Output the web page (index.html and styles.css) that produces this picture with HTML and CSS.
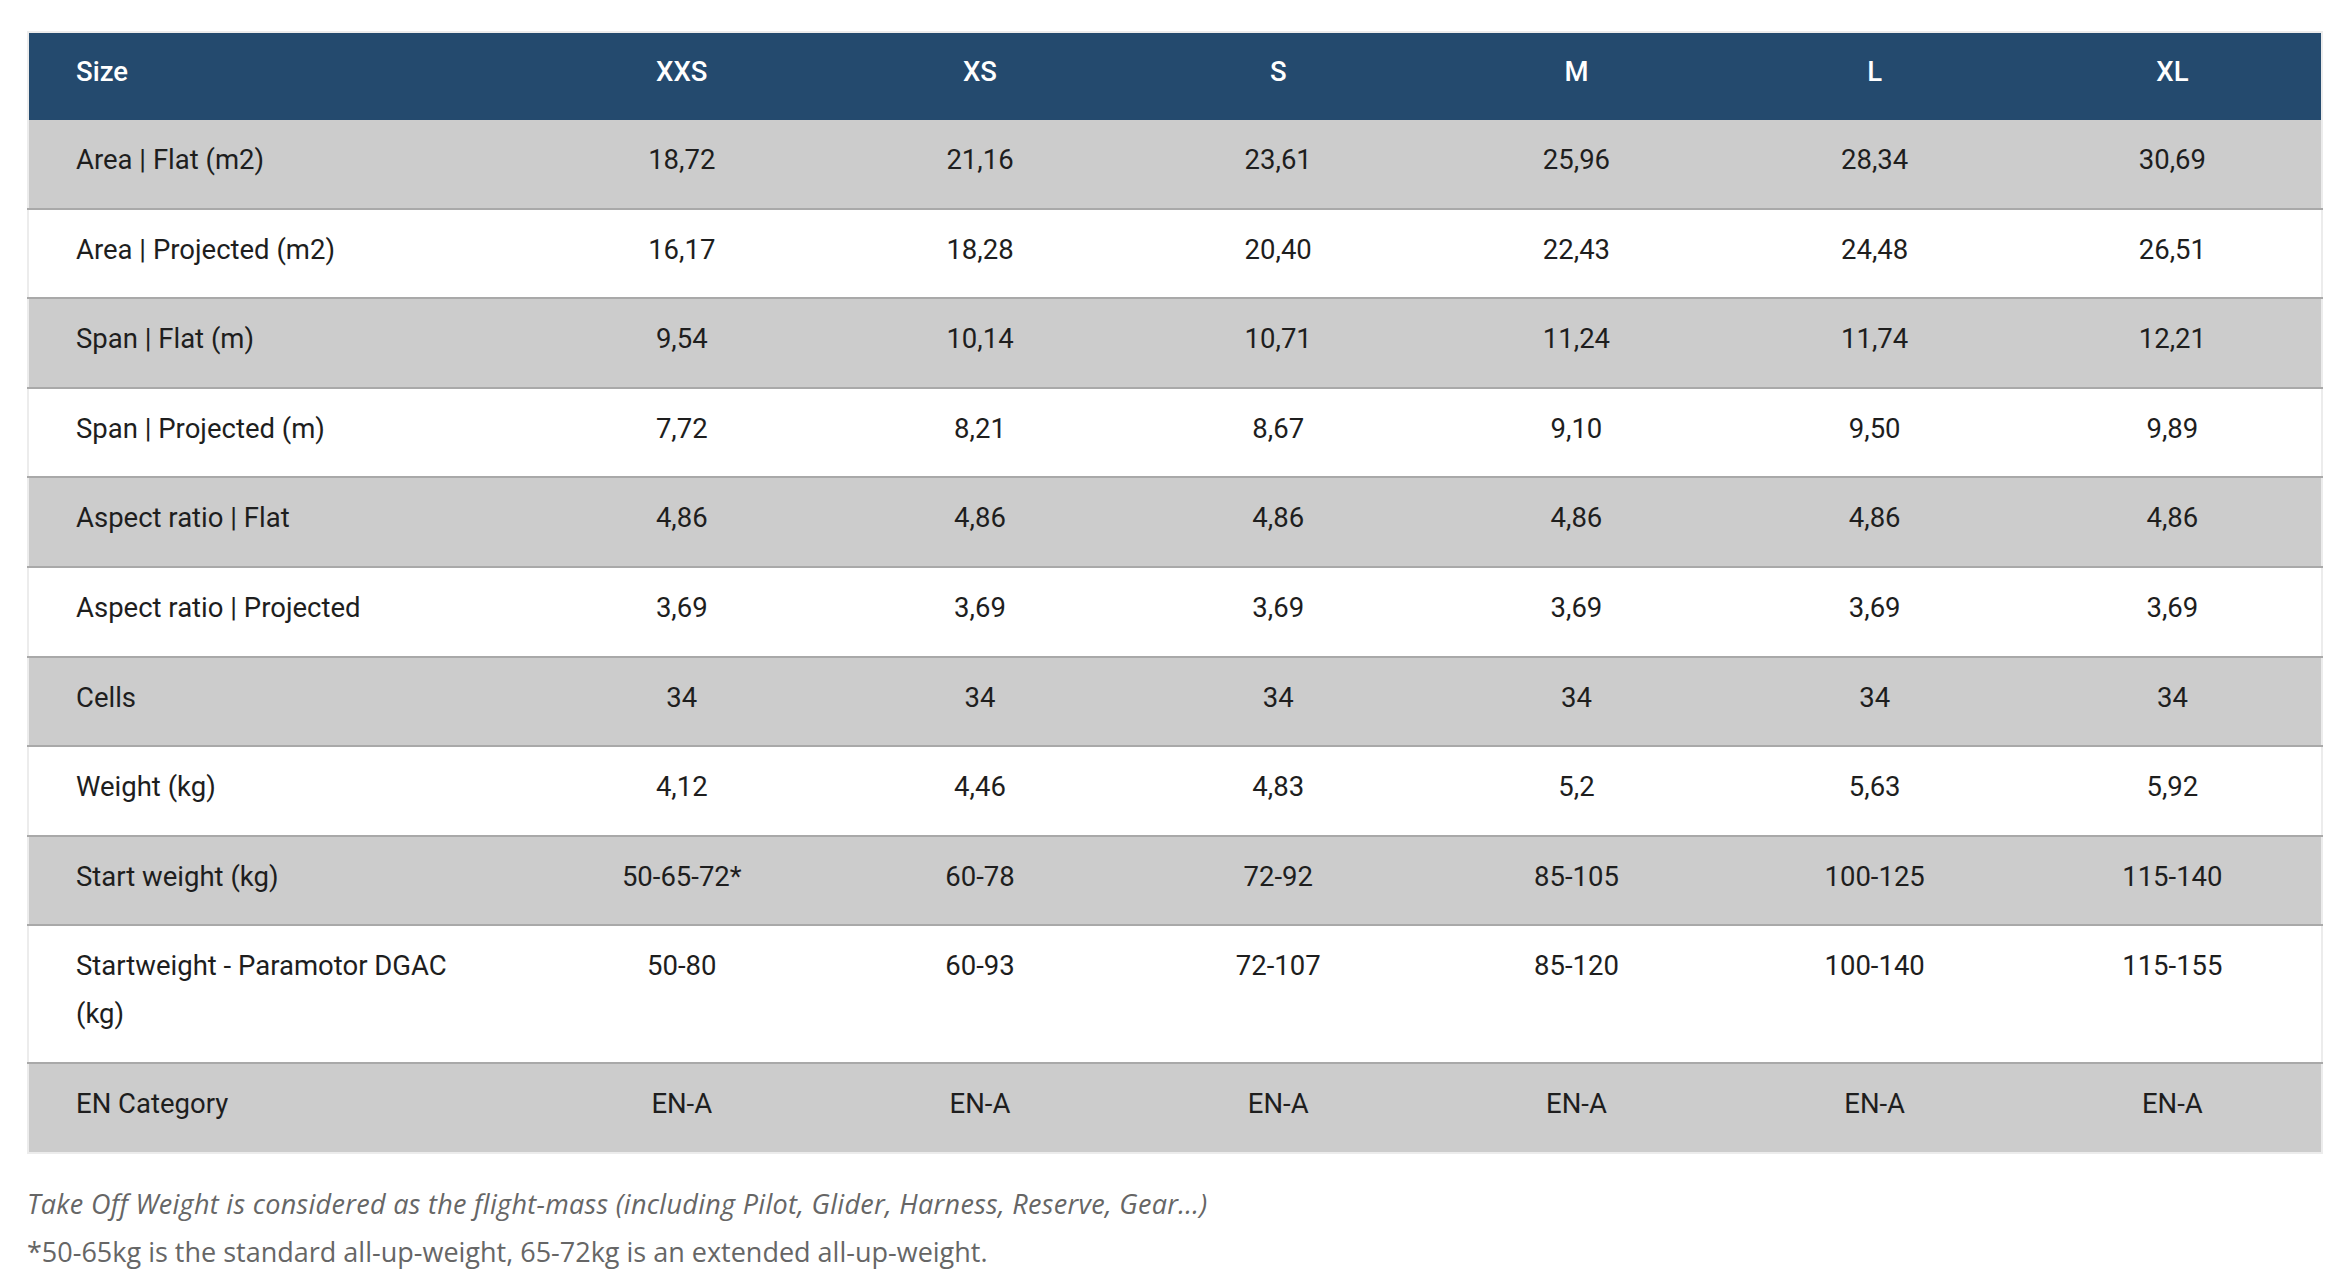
FILE: index.html
```html
<!DOCTYPE html>
<html lang="en">
<head>
<meta charset="utf-8">
<title>Size chart</title>
<link rel="stylesheet" href="styles.css">
</head>
<body>
<div class="page">
  <table class="specs">
    <colgroup>
      <col class="col-label">
      <col class="col-size"><col class="col-size"><col class="col-size">
      <col class="col-size"><col class="col-size"><col class="col-size">
    </colgroup>
    <thead>
      <tr><th class="label">Size</th><th>XXS</th><th>XS</th><th>S</th><th>M</th><th>L</th><th>XL</th></tr>
    </thead>
    <tbody>
      <tr class="alt"><td class="label">Area | Flat (m2)</td><td>18,72</td><td>21,16</td><td>23,61</td><td>25,96</td><td>28,34</td><td>30,69</td></tr>
      <tr><td class="label">Area | Projected (m2)</td><td>16,17</td><td>18,28</td><td>20,40</td><td>22,43</td><td>24,48</td><td>26,51</td></tr>
      <tr class="alt"><td class="label">Span | Flat (m)</td><td>9,54</td><td>10,14</td><td>10,71</td><td>11,24</td><td>11,74</td><td>12,21</td></tr>
      <tr><td class="label">Span | Projected (m)</td><td>7,72</td><td>8,21</td><td>8,67</td><td>9,10</td><td>9,50</td><td>9,89</td></tr>
      <tr class="alt"><td class="label">Aspect ratio | Flat</td><td>4,86</td><td>4,86</td><td>4,86</td><td>4,86</td><td>4,86</td><td>4,86</td></tr>
      <tr><td class="label">Aspect ratio | Projected</td><td>3,69</td><td>3,69</td><td>3,69</td><td>3,69</td><td>3,69</td><td>3,69</td></tr>
      <tr class="alt"><td class="label">Cells</td><td>34</td><td>34</td><td>34</td><td>34</td><td>34</td><td>34</td></tr>
      <tr><td class="label">Weight (kg)</td><td>4,12</td><td>4,46</td><td>4,83</td><td>5,2</td><td>5,63</td><td>5,92</td></tr>
      <tr class="alt"><td class="label">Start weight (kg)</td><td>50-65-72*</td><td>60-78</td><td>72-92</td><td>85-105</td><td>100-125</td><td>115-140</td></tr>
      <tr><td class="label">Startweight - Paramotor DGAC (kg)</td><td>50-80</td><td>60-93</td><td>72-107</td><td>85-120</td><td>100-140</td><td>115-155</td></tr>
      <tr class="alt"><td class="label">EN Category</td><td>EN-A</td><td>EN-A</td><td>EN-A</td><td>EN-A</td><td>EN-A</td><td>EN-A</td></tr>
    </tbody>
  </table>
  <div class="notes">
    <p class="note-italic">Take Off Weight is considered as the flight-mass (including Pilot, Glider, Harness, Reserve, Gear...)</p>
    <p class="note">*50-65kg is the standard all-up-weight, 65-72kg is an extended all-up-weight.</p>
  </div>
</div>
</body>
</html>
```
FILE: styles.css
```css
html, body {
  margin: 0;
  padding: 0;
  background: #ffffff;
}

body {
  font-family: "Open Sans", "Liberation Sans", sans-serif;
  color: #1e1e1e;
}

.page {
  padding: 31px 27px 0 27px;
}

.specs {
  width: 100%;
  table-layout: fixed;
  border-collapse: collapse;
  border: 2px solid #ececec;
  font-family: Roboto, "Open Sans", sans-serif;
  font-size: 27.5px;
  line-height: 48px;
}

.col-label {
  width: 22%;
}

.col-size {
  width: 13%;
}

.specs th,
.specs td {
  padding: 16px 10px 23.6px 10px;
  text-align: center;
  vertical-align: top;
  font-weight: 400;
}

.specs th.label,
.specs td.label {
  text-align: left;
  padding-left: 47px;
  padding-right: 60px;
}

.specs thead tr {
  background: #244a6e;
}

.specs th {
  color: #ffffff;
  font-weight: 500;
  padding-top: 15px;
  padding-bottom: 24px;
}

.specs tbody tr {
  background: #ffffff;
  border-top: 2px solid #a9a9a9;
}

.specs tbody tr:first-child {
  border-top: none;
}

.specs tbody tr.alt {
  background: #cccccc;
}

.notes {
  padding-top: 26px;
  color: #666666;
  font-size: 27px;
  line-height: 48px;
}

.notes p {
  margin: 0;
}

.note-italic {
  font-style: italic;
  letter-spacing: 0.3px;
}
```
